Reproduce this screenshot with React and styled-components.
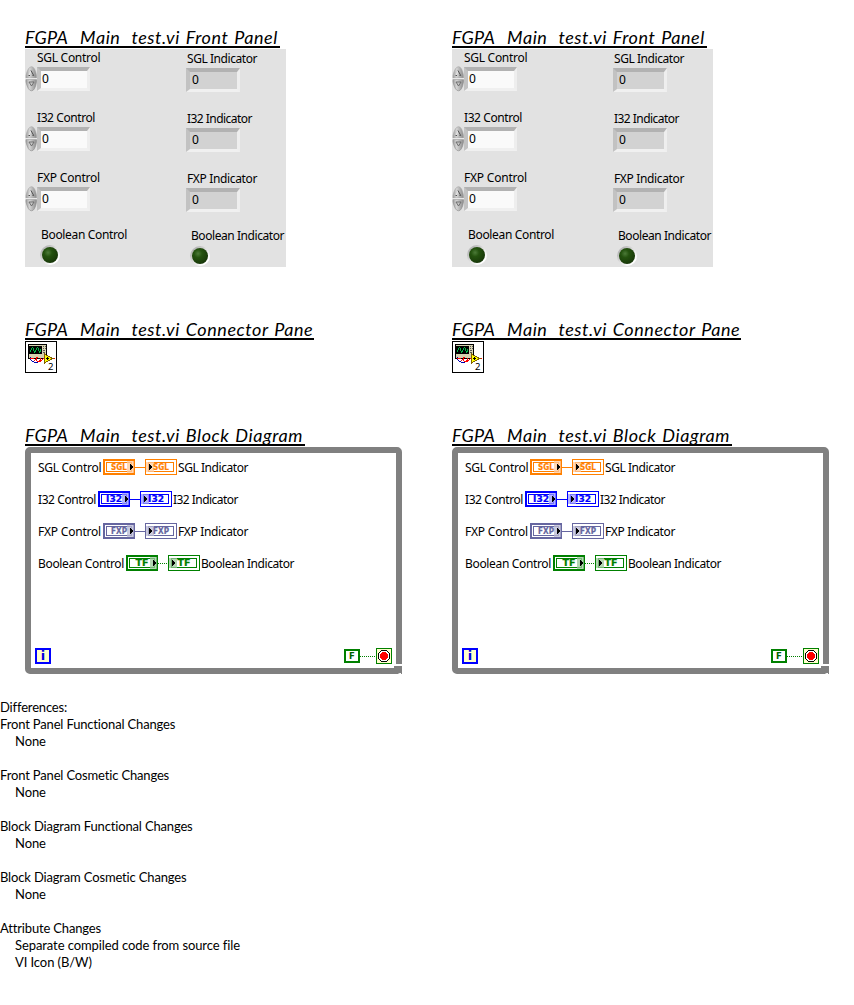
import React from "react";
import styled, { createGlobalStyle } from "styled-components";

const GlobalStyle = createGlobalStyle`
  * { box-sizing: border-box; }
  body { margin: 0; background: #fff; color: #000; }
`;

const uiFont = `"Noto Sans", "Open Sans", sans-serif`;
const docFont = `Lato, "Liberation Sans", sans-serif`;

const Page = styled.main`
  width: 854px;
  height: 1005px;
  overflow: hidden;
`;

const Comparison = styled.div`
  display: grid;
  grid-template-columns: 427px 427px;
`;

const Version = styled.section`
  padding: 26px 0 0 25px;
`;

const Heading = styled.h2`
  width: ${(p) => p.$width}px;
  height: 22px;
  margin: ${(p) => p.$top || 0}px 0 1px;
  overflow: hidden;
  border-bottom: 2px solid #000;
  font: italic 400 18px/23px ${docFont};
  letter-spacing: 0.55px;
  word-spacing: 1.2px;
  white-space: nowrap;
`;

const Acronym = styled.span`
  letter-spacing: 0.2px;
`;

const Underscore = styled.span`
  display: inline-block;
  width: ${(p) => p.$width}px;
  height: 20px;
  line-height: 25px;
  vertical-align: top;
`;

const FrontPanel = styled.div`
  display: grid;
  grid-template-columns: 150px 111px;
  width: 261px;
  height: 218px;
  overflow: hidden;
  background: #e2e2e2;
`;

const PanelColumn = styled.div`
  display: flex;
  flex-direction: column;
  padding-top: ${(p) => (p.$indicator ? 2 : 1)}px;
`;

const PanelItem = styled.div`
  height: ${(p) => p.$height || 60}px;
  flex: none;
`;

const PanelLabel = styled.div`
  height: 16px;
  padding-left: ${(p) => p.$indent}px;
  font: 12px/16px ${uiFont};
  letter-spacing: ${(p) => p.$track}px;
  white-space: nowrap;
`;

const FieldRow = styled.div`
  display: flex;
  align-items: flex-start;
  padding-left: ${(p) => (p.$indicator ? 11 : 0)}px;
`;

const Field = styled.div`
  width: ${(p) => (p.$indicator ? 54 : 53)}px;
  height: 24px;
  margin-top: 1px;
  padding-left: ${(p) => (p.$indicator ? 2 : 1)}px;
  border-style: solid;
  border-width: 4px 3px 3px 4px;
  border-color: #b2b2b2 #eeeeee #f0f0f0 #c2c2c2;
  background: ${(p) => (p.$indicator ? "#d2d2d2" : "#fafafa")};
  font: 12px/${(p) => (p.$indicator ? 15 : 16)}px ${uiFont};
`;

const Led = styled.div`
  width: 20px;
  height: 20px;
  margin: 2px 0 0 15px;
  border-radius: 50%;
  background: linear-gradient(135deg, #b8b8b8 20%, #e2e2e2 50%, #fff 80%);
  padding: 2px;
  &::before {
    content: "";
    display: block;
    width: 16px;
    height: 16px;
    border-radius: 50%;
    background: radial-gradient(circle at 38% 35%, #4c7a38 0, #24520f 28%, #1c400b 60%, #0c2203 100%);
  }
`;

const Diagram = styled.div`
  position: relative;
  display: flex;
  flex-direction: column;
  width: 377px;
  height: 227px;
  padding: 0 4px 4px 7px;
  border: 6px solid #808080;
  border-radius: 5px;
`;

const Wires = styled.div`
  margin-top: -2px;
`;

const WireRow = styled.div`
  display: flex;
  align-items: center;
  height: 32px;
`;

const NodeLabel = styled.span`
  width: ${(p) => p.$width}px;
  flex: none;
  padding: 2px 0 0 ${(p) => p.$indent || 0}px;
  font: 12px/16px ${uiFont};
  letter-spacing: ${(p) => p.$track}px;
  white-space: nowrap;
`;

const LoopFooter = styled.div`
  display: flex;
  align-items: center;
  justify-content: space-between;
  margin: auto 0 0 -3px;
`;

const Iteration = styled.div`
  width: 16px;
  height: 16px;
  border: 2px solid #0000ff;
  background: #ffffcc;
  color: #0000e0;
  font: bold 13px/12px "DejaVu Sans", sans-serif;
  text-align: center;
`;

const ResizeCorner = styled.svg`
  position: absolute;
  right: -6px;
  bottom: -6px;
`;

const Block = styled.svg`
  display: block;
  flex: none;
`;

const Report = styled.div`
  padding-top: 25px;
  font: 13px/17px ${docFont};
`;

const ReportGroup = styled.div`
  margin-bottom: 17px;
`;

const ReportLine = styled.div`
  height: 17px;
  padding-left: ${(p) => (p.$nested ? 15 : 0)}px;
  letter-spacing: ${(p) => (p.$nested ? -0.09 : -0.16)}px;
  white-space: nowrap;
`;

function Spinner() {
  return (
    <Block width="12" height="26" viewBox="0 0 12 26">
      <defs>
        <linearGradient id="metal">
          <stop offset="0" stopColor="#a0a0a0" />
          <stop offset="0.35" stopColor="#d4d4d4" />
          <stop offset="1" stopColor="#8c8c8c" />
        </linearGradient>
      </defs>
      <path d="M1 12V9.500Q3 .7 6.500 .7T11.500 9.500V12z" fill="url(#metal)" stroke="#a4a4a4" strokeWidth=".6" />
      <path d="M1 13.500v2.500Q3 24.800 6.500 24.800T11.500 16v-2.500z" fill="url(#metal)" stroke="#8c8c8c" strokeWidth=".6" />
      <path d="M4 9.500 6 5" fill="none" stroke="#e8e8e8" />
      <path d="M3.500 9.500H5M6 4.500l2.700 5H7.500" fill="none" stroke="#505050" />
      <path d="M4 16h5L6.500 20z" fill="#c8c8c8" stroke="#666" strokeWidth=".9" />
      <path d="M0 12.700h12" stroke="#eee" />
    </Block>
  );
}

function ViIcon() {
  return (
    <Block width="32" height="32" viewBox="0 0 32 32" shapeRendering="crispEdges">
      <rect x=".5" y=".5" width="31" height="31" fill="#fff" stroke="#000" />
      <path d="M3 3h19v15H3z" fill="#000" />
      <path d="M4 4h17v13H4z" fill="#d6d2b0" />
      <path d="M4 5h13v8H4z" fill="#000" />
      <path d="M5 9h1v2H5zM6 7h1v2H6zM7 6h1v1H7zM8 7h1v3H8zM9 10h1v2H9zM10 9h1v2h-1zM11 7h1v2h-1zM12 6h1v1h-1zM13 7h1v3h-1zM14 10h1v2h-1zM15 8h1v3h-1z" fill="#00b848" />
      <path d="M18 5h1v1h-1zM20 5h1v1h-1zM18 7h1v1h-1zM20 7h1v1h-1zM18 9h2v1h-2zM18 11h2v1h-2z" fill="#555" />
      <path d="M5 16h1v3H5zM6 19h1v1H6zM7 20h2v1H7zM9 21h4v1H9zM13 20h2v1h-2zM15 19h2v1h-2z" fill="#0000b0" />
      <path d="M5 17h4v1H5zM9 19h1v1H9zM10 18h1v-2h2v1h-1v3h2v-1h1v-2h1v2h1v-1h1v-1h3v1h-3v1h-1v1h-1v1h-4v-1h-1zM28 17h2v1h-2z" fill="#f00" />
      <path d="M19.500 13v9l8-4.500z" fill="#ff0" stroke="#806000" />
      <path d="M21 17h3v1h-3zM22 16h1v3h-1z" fill="#000" />
      <text x="23" y="29" fontFamily="Noto Sans, sans-serif" fontSize="9.5">2</text>
    </Block>
  );
}

function Terminal({ text, color, shade, sink }) {
  const boolean = text === "TF";
  return (
    <Block width="32" height="16" viewBox="0 0 32 16" shapeRendering="crispEdges">
      <rect width="32" height="16" fill={color} />
      <rect x={sink ? 1 : 2} y={sink ? 1 : 2} width={sink ? 30 : 28} height={sink ? 14 : 12} fill="#fff" />
      <rect x="3.5" y="3.5" width="25" height="9" fill="#fff" stroke={color} />
      <rect x={sink ? 1 : 24} y={sink ? 3 : 2} width={sink ? 8 : 7} height={sink ? 10 : 12} fill={shade} opacity=".75" />
      <text
        x={boolean ? 9.5 : 8}
        y="11"
        textLength={boolean ? 13 : 16}
        lengthAdjust="spacingAndGlyphs"
        fontFamily="DejaVu Sans, sans-serif"
        fontWeight="bold"
        fontSize="8"
        fill={color}
        stroke={color}
        strokeWidth=".2"
      >
        {text}
      </text>
      <path d={sink ? "M4 5h1v1h1v1h1v2H6v1H5v1H4z" : "M27 5h1v1h1v1h1v2h-1v1h-1v1h-1z"} fill="#000" />
    </Block>
  );
}

function Wire({ color, dotted }) {
  return (
    <Block width="10" height="16" viewBox="0 0 10 16" shapeRendering="crispEdges">
      <path d="M0 8.5h10" stroke={color} strokeDasharray={dotted ? "1 1" : undefined} />
    </Block>
  );
}

function StopLogic() {
  return (
    <Block width="48" height="16" viewBox="0 0 48 16" shapeRendering="crispEdges">
      <rect x="1" y="2" width="14" height="12" fill="#fff" stroke="#008000" strokeWidth="2" />
      <text x="5" y="11" fontFamily="DejaVu Sans, sans-serif" fontWeight="bold" fontSize="8.5" fill="#006000">F</text>
      <path d="M16 8.5h16" stroke="#008000" strokeDasharray="1 1" />
      <rect x="32.5" y=".5" width="15" height="15" fill="#ffffcc" stroke="#008000" />
      <path d="M37.5 2.500h5l3 3v5l-3 3h-5l-3-3v-5z" fill="#fff" stroke="#000" />
      <circle cx="40" cy="8" r="4.300" fill="#f00" />
    </Block>
  );
}

const terminals = [
  { name: "SGL", text: "SGL", color: "#ff8000", shade: "#ffc99c", width: 65, tracks: [-0.29, -0.44] },
  { name: "I32", text: "I32", color: "#0000ff", shade: "#9a9aff", width: 60, tracks: [-0.42, -0.54] },
  { name: "FXP", text: "FXP", color: "#6666a0", shade: "#b8b8d2", width: 65, tracks: [-0.22, -0.36] },
  { name: "Boolean", text: "TF", color: "#008000", shade: "#99c899", width: 88, tracks: [-0.34, -0.44] },
];

function PanelSide({ indicator }) {
  const kind = indicator ? "Indicator" : "Control";
  const side = indicator ? 1 : 0;
  return (
    <PanelColumn $indicator={indicator}>
      {terminals.slice(0, 3).map(({ name, tracks }, i) => (
        <PanelItem key={name} $height={i === 2 ? 57 : 60}>
          <PanelLabel $indent={12} $track={tracks[side]}>{name} {kind}</PanelLabel>
          <FieldRow $indicator={indicator}>
            {!indicator && <Spinner />}
            <Field $indicator={indicator}>0</Field>
          </FieldRow>
        </PanelItem>
      ))}
      <PanelItem $height={40}>
        <PanelLabel $indent={16} $track={terminals[3].tracks[side]}>Boolean {kind}</PanelLabel>
        <Led />
      </PanelItem>
    </PanelColumn>
  );
}

function Title({ part, width, top }) {
  return (
    <Heading $width={width} $top={top}>
      <Acronym>FGPA</Acronym>
      <Underscore $width={12}>_</Underscore>Main<Underscore $width={11}>_</Underscore>test.vi {part}
    </Heading>
  );
}

function VersionView() {
  return (
    <Version>
      <Title part="Front Panel" width={255} />
      <FrontPanel>
        <PanelSide />
        <PanelSide indicator />
      </FrontPanel>
      <Title part="Connector Pane" width={289} top={51} />
      <ViIcon />
      <Title part="Block Diagram" width={280} top={51} />
      <Diagram>
        <Wires>
          {terminals.map((w) => (
            <WireRow key={w.name}>
              <NodeLabel $width={w.width} $track={w.tracks[0]}>{w.name} Control</NodeLabel>
              <Terminal text={w.text} color={w.color} shade={w.shade} />
              <Wire color={w.color} dotted={w.text === "TF"} />
              <Terminal text={w.text} color={w.color} shade={w.shade} sink />
              <NodeLabel $indent={1} $track={w.tracks[1]}>{w.name} Indicator</NodeLabel>
            </WireRow>
          ))}
        </Wires>
        <LoopFooter>
          <Iteration>i</Iteration>
          <StopLogic />
        </LoopFooter>
        <ResizeCorner width="9" height="11" viewBox="0 0 9 11" shapeRendering="crispEdges">
          <rect x="1" y="1" width="8" height="2" fill="#fff" />
          <path d="M1 3h8v8H8v-1H5v1H0V5h1z" fill="#808080" />
        </ResizeCorner>
      </Diagram>
    </Version>
  );
}

const report = [
  ["Front Panel Functional Changes", "None"],
  ["Front Panel Cosmetic Changes", "None"],
  ["Block Diagram Functional Changes", "None"],
  ["Block Diagram Cosmetic Changes", "None"],
  ["Attribute Changes", "Separate compiled code from source file", "VI Icon (B/W)"],
];

export default function App() {
  return (
    <Page>
      <GlobalStyle />
      <Comparison>
        <VersionView />
        <VersionView />
      </Comparison>
      <Report>
        <ReportLine>Differences:</ReportLine>
        {report.map(([title, ...items]) => (
          <ReportGroup key={title}>
            <ReportLine>{title}</ReportLine>
            {items.map((item) => (
              <ReportLine key={item} $nested>{item}</ReportLine>
            ))}
          </ReportGroup>
        ))}
      </Report>
    </Page>
  );
}
